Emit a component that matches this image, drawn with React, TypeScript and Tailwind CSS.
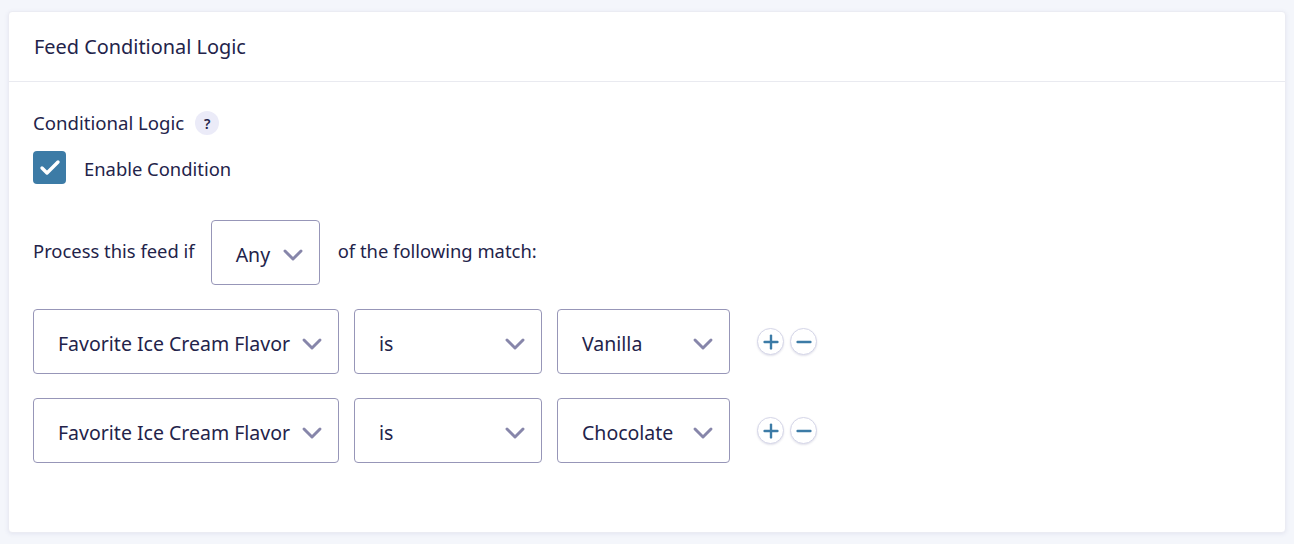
import { Check, ChevronDown, Minus, Plus } from "lucide-react";

const Select = ({ label, className }: { label: string; className: string }) => (
  <div
    className={`flex h-[65px] shrink-0 items-center justify-between rounded border border-[#9796b8] bg-white pl-6 pr-[10px] text-[19.5px] ${className}`}
  >
    <span className="translate-y-0.5 whitespace-nowrap">{label}</span>
    <ChevronDown className="size-8 translate-y-0.5 text-[#8786aa]" strokeWidth={2.2} />
  </div>
);

const RoundButton = ({ children }: { children: React.ReactNode }) => (
  <div className="flex size-[27px] items-center justify-center rounded-full border border-[#d5d6e8] bg-white text-[#3c7ba6] shadow-[0_1px_2px_rgba(60,60,120,0.15)]">
    {children}
  </div>
);

const Rule = ({ value }: { value: string }) => (
  <div className="flex items-center">
    <Select label="Favorite Ice Cream Flavor" className="w-[306px]" />
    <Select label="is" className="ml-[15px] w-[188px]" />
    <Select label={value} className="ml-[15px] w-[173px]" />
    <div className="ml-[27px] flex gap-1.5">
      <RoundButton>
        <Plus className="size-[22px]" strokeWidth={2.6} />
      </RoundButton>
      <RoundButton>
        <Minus className="size-[22px]" strokeWidth={2.6} />
      </RoundButton>
    </div>
  </div>
);

export default function App() {
  return (
    <div className="h-[544px] bg-[#f4f6fb] px-2 pt-[11px] font-['Noto_Sans',sans-serif] text-[#23234a]">
      <div className="h-[522px] rounded border border-[#ebecf3] bg-white shadow-[0_1px_4px_rgba(90,90,160,0.1)]">
        <div className="flex h-[70px] items-center border-b border-[#e9eaf0] pl-[25px] text-[19.9px]">
          Feed Conditional Logic
        </div>
        <div className="pl-6">
          <div className="mt-[25px] flex h-8 items-center gap-[11px] text-[18.6px]">
            Conditional Logic
            <span className="flex size-6 items-center justify-center rounded-full bg-[#ebebf8] text-[14px] font-semibold">
              ?
            </span>
          </div>
          <div className="mt-[12px] flex items-center gap-[18px] text-[18.4px]">
            <div className="flex size-[33px] items-center justify-center rounded bg-[#3c7ba6] text-white">
              <Check className="size-6" strokeWidth={3.4} />
            </div>
            <span className="translate-y-px">Enable Condition</span>
          </div>
          <div className="mt-9 flex items-center text-[18.4px]">
            <span className="-translate-y-0.5">Process this feed if</span>
            <Select label="Any" className="ml-4 w-[109px]" />
            <span className="ml-[18px] -translate-y-0.5">of the following match:</span>
          </div>
          <div className="mt-6 flex flex-col gap-6">
            <Rule value="Vanilla" />
            <Rule value="Chocolate" />
          </div>
        </div>
      </div>
    </div>
  );
}
